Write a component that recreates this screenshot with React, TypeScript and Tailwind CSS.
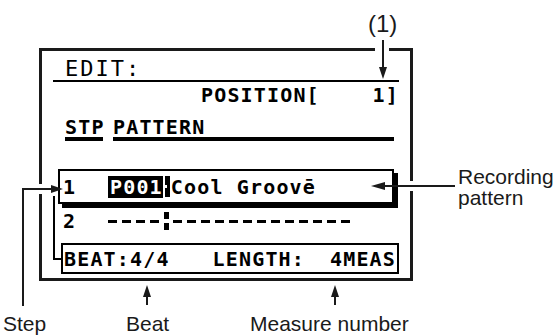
import React from "react";

const lcd =
  "font-['DejaVu_Sans_Mono',monospace] font-bold text-[20px] leading-none tracking-[1.16px] whitespace-pre text-black";

function Dashes({ n }: { n: number }) {
  return (
    <span className="flex items-center gap-[5px]">
      {Array.from({ length: n }).map((_, i) => (
        <span key={i} className="block w-[9px] h-[3px] bg-black" />
      ))}
    </span>
  );
}

function Callouts() {
  const c = "#1a1a1a";
  return (
    <svg className="absolute inset-0 pointer-events-none" width="558" height="335" viewBox="0 0 558 335">
      {/* gaps cut in the frame where the leaders pass */}
      <rect x="375" y="45" width="14" height="8" fill="#fff" />
      <rect x="408" y="181" width="7" height="10" fill="#fff" />
      <rect x="37" y="184" width="7" height="10" fill="#fff" />

      {/* (1) */}
      <line x1="383" y1="40" x2="383" y2="70" stroke={c} strokeWidth="2" />
      <polygon points="379,67 387,67 383,79" fill={c} />

      {/* recording pattern */}
      <line x1="455" y1="186" x2="380" y2="186" stroke={c} strokeWidth="2" />
      <polygon points="371,186 385,182 385,190" fill={c} />

      {/* step */}
      <polyline points="23,306 23,189 52,189" fill="none" stroke={c} strokeWidth="2" />
      <polygon points="63,189 51,185 51,193" fill={c} />

      {/* cursor bracket */}
      <polyline points="54,196 54,259 61,259" fill="none" stroke="#000" strokeWidth="2" />

      {/* beat / measure */}
      <line x1="147" y1="305" x2="147" y2="294" stroke={c} strokeWidth="2" />
      <polygon points="143,297 151,297 147,285" fill={c} />
      <line x1="335" y1="305" x2="335" y2="294" stroke={c} strokeWidth="2" />
      <polygon points="331,297 339,297 335,285" fill={c} />
    </svg>
  );
}

export default function App() {
  const label = "absolute font-['Liberation_Sans',Arial,sans-serif] text-[21px] leading-none text-[#1a1a1a] whitespace-nowrap";
  return (
    <div className="relative w-[558px] h-[335px] bg-white overflow-hidden">
      <div className="ml-[39px] mt-[48px] w-[374px] border-[3px] border-[#1a1a1a] px-[11px] pb-[4px]">
        <div className="h-[29px] flex items-end pl-[12px]">
          <span className="font-['DejaVu_Sans_Mono',monospace] text-[22px] leading-none tracking-[2px] text-black">EDIT:</span>
        </div>
        <div className="h-[2px] bg-black" />
        <div className="h-[26px] flex items-center justify-end">
          <span className={lcd}>POSITION[    1]</span>
        </div>
        <div className="h-[33px] flex items-end">
          <span className={`${lcd} border-b-4 border-black ml-[12px] w-[38px]`}>STP</span>
          <span className={`${lcd} border-b-4 border-black ml-[10px] flex-1 mr-[5px]`}>PATTERN</span>
        </div>

        <div className="mt-[28px] ml-[5px] w-[336px] h-[35px] border-2 border-black shadow-[4px_4px_0_#000] flex items-center pl-[3px]">
          <span className={`${lcd} w-[45px]`}>1</span>
          <span className={`${lcd} bg-black text-white py-[1px] pl-[2px]`}>P001</span>
          <span className="w-[8px] h-[21px] flex justify-end pr-[1px]">
            <span className="w-[5px] h-full bg-black relative">
              <span className="absolute left-0 top-[9px] w-[2px] h-[3px] bg-white" />
            </span>
          </span>
          <span className={lcd}>Cool Groovē</span>
        </div>

        <div className="mt-[7px] h-[20px] flex items-center pl-[10px]">
          <span className={`${lcd} w-[45px]`}>2</span>
          <Dashes n={4} />
          <span className="ml-[5px] w-[5px] h-[18px] flex flex-col justify-between">
            <span className="h-[7px] bg-black" />
            <span className="h-[7px] bg-black" />
          </span>
          <span className="ml-[4px]">
            <Dashes n={13} />
          </span>
        </div>

        <div className="mt-[12px] ml-[8px] h-[31px] border-2 border-black flex items-center pl-[1px] pr-[1px]">
          <span className={lcd}>BEAT:4/4</span>
          <span className={`${lcd} ml-[43px]`}>LENGTH:</span>
          <span className={`${lcd} ml-auto`}>4MEAS</span>
        </div>
      </div>

      <Callouts />

      <span className={`${label} text-[24px] left-[368px] top-[12px]`}>(1)</span>
      <span className={`${label} left-[458px] top-[166px]`}>Recording</span>
      <span className={`${label} left-[458px] top-[187px]`}>pattern</span>
      <span className={`${label} left-[3px] top-[313px]`}>Step</span>
      <span className={`${label} left-[126px] top-[313px]`}>Beat</span>
      <span className={`${label} left-[250px] top-[313px]`}>Measure number</span>
    </div>
  );
}
